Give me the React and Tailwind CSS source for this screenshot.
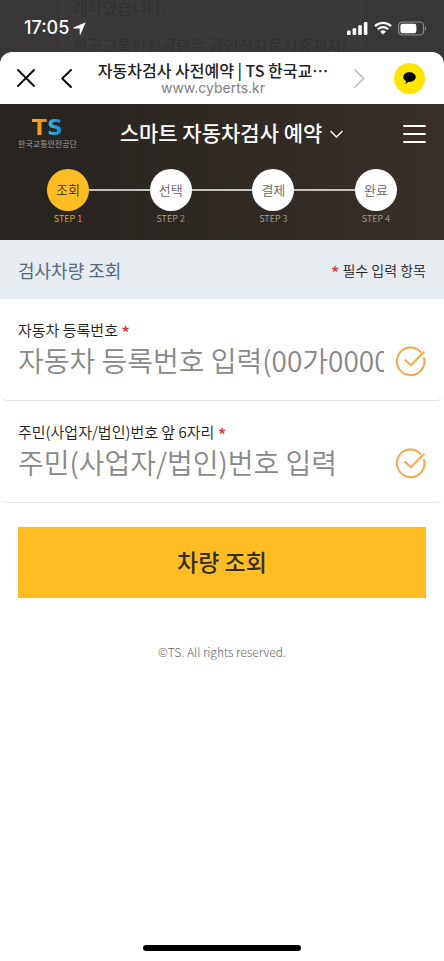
import React, { useState } from "react";

const steps = [
    { id: 1, name: "조회" },
    { id: 2, name: "선택" },
    { id: 3, name: "결제" },
    { id: 4, name: "완료" },
];

const StatusBar = () => {
    return (
        <div className="relative h-[52px] overflow-hidden bg-[#383637] text-white">
            {/* dimmed page behind the sheet */}
            <div className="absolute inset-y-0 left-[60px] right-[82px] overflow-hidden whitespace-nowrap bg-[#3a3839] pl-[13px] text-base leading-[38px] text-[#312f30]" aria-hidden="true">
                <div className="-mt-3">래하였습니다.</div>
                <div>한국교통안전공단은 공인전자문서중계자(</div>
            </div>
            <div className="relative flex items-center justify-between pl-6 pr-[17px] pt-[14px]">
                <div className="flex items-center gap-1">
                    <span className="font-['Inter'] text-[18px] font-medium leading-7">17:05</span>
                    <svg className="h-[13px] w-[13px]" viewBox="0 0 13 13" fill="currentColor">
                        <path d="M12.7.3 7.6 12.5c-.3.5-.9.4-.9-.2V6.4H.7c-.6 0-.7-.7-.1-.9z" />
                    </svg>
                </div>
                <div className="flex items-center gap-[6px]">
                    <svg className="h-[13px] w-[21px]" viewBox="0 0 21 13" fill="currentColor">
                        <rect x="0" y="8.6" width="3.6" height="4.4" rx="1" />
                        <rect x="5.6" y="6.2" width="3.6" height="6.8" rx="1" />
                        <rect x="11.2" y="3.3" width="3.6" height="9.7" rx="1" />
                        <rect x="16.8" y="0" width="3.6" height="13" rx="1" />
                    </svg>
                    <svg className="h-[14px] w-[18px]" viewBox="0 0 18 14" fill="none" stroke="currentColor" strokeWidth="2.3">
                        <path d="M1 5.1a11.4 11.4 0 0 1 16 0" />
                        <path d="M3.9 8.3a7.2 7.2 0 0 1 10.2 0" />
                        <path d="M9 13.6 6.2 10.7a4 4 0 0 1 5.6 0z" fill="currentColor" stroke="none" />
                    </svg>
                    <svg className="h-[15px] w-[29px]" viewBox="0 0 29 15" fill="none">
                        <rect x="0.6" y="1" width="25" height="13" rx="3.8" stroke="#8d8b8c" strokeWidth="1.2" />
                        <rect x="2.4" y="2.8" width="16" height="9.4" rx="2.2" fill="white" />
                        <path d="M27 5.5c1.6.6 1.6 3.4 0 4z" fill="#8d8b8c" />
                    </svg>
                </div>
            </div>
        </div>
    );
}

const BrowserBar = () => {
    return (
        <div className="bg-[#383637]">
            <div className="flex h-[52px] items-center rounded-t-xl bg-white pl-[17px] pr-[19px]">
                <button type="button" aria-label="닫기">
                    <svg className="h-[18px] w-[18px]" viewBox="0 0 18 18" fill="none" stroke="black" strokeWidth="1.8" strokeLinecap="round">
                        <path d="M1 1l16 16M17 1L1 17" />
                    </svg>
                </button>
                <button type="button" aria-label="뒤로" className="ml-[26px]">
                    <svg className="h-[19px] w-[11px]" viewBox="0 0 11 19" fill="none" stroke="black" strokeWidth="1.8" strokeLinecap="round" strokeLinejoin="round">
                        <path d="M10 1L1.2 9.5 10 18" />
                    </svg>
                </button>
                <div className="min-w-0 flex-1 text-center">
                    <div className="whitespace-nowrap text-base font-medium leading-5 text-[#222]">자동차검사 사전예약 | TS 한국교⋯</div>
                    <div className="font-['Inter'] text-sm leading-4 text-[#808080]">www.cyberts.kr</div>
                </div>
                <button type="button" aria-label="앞으로" className="mr-[29px]">
                    <svg className="h-[19px] w-[11px]" viewBox="0 0 11 19" fill="none" stroke="#b9b9b9" strokeWidth="1.6" strokeLinecap="round" strokeLinejoin="round">
                        <path d="M1 1l8.8 8.5L1 18" />
                    </svg>
                </button>
                <button type="button" aria-label="카카오톡 공유" className="flex h-[31px] w-[31px] items-center justify-center rounded-full bg-[#fde500]">
                    <svg className="h-3 w-[13px]" viewBox="0 0 13 12" fill="black">
                        <path d="M6.5.3C3 .3.3 2.4.3 5.1c0 1.8 1.1 3.2 2.8 4.1l-.6 2.2c0 .3.2.4.4.3l2.7-1.9.9.1c3.5 0 6.2-2.1 6.2-4.8S10 .3 6.5.3z" />
                    </svg>
                </button>
            </div>
        </div>
    );
}

const Header = () => {
    return (
        <header className="h-[136px] bg-linear-to-r from-[#27231f] to-[#382f28] text-white">
            <div className="flex h-[60px] items-center pl-[17px] pr-[18px]">
                <a href="#" className="flex w-[61px] flex-col items-center">
                    <span className="flex font-['DejaVu_Sans'] text-[22px] font-bold leading-5">
                        <span className="bg-linear-to-r from-[#f9b51c] to-[#ee7f1c] bg-clip-text text-transparent">T</span>
                        <span className="bg-linear-to-r from-[#35bdea] to-[#1586cf] bg-clip-text text-transparent">S</span>
                    </span>
                    <span className="whitespace-nowrap text-[8px] leading-3 text-[#a09c98]">한국교통안전공단</span>
                </a>
                <button type="button" className="flex flex-1 items-center justify-center gap-2 pb-1 pl-5">
                    <span className="whitespace-nowrap text-[21px] font-medium leading-8">스마트 자동차검사 예약</span>
                    <svg className="mt-1 h-2 w-[13px]" viewBox="0 0 13 8" fill="none" stroke="white" strokeWidth="1.4">
                        <path d="M.5 1l6 6 6-6" />
                    </svg>
                </button>
                <button type="button" aria-label="메뉴" className="ml-[38px] flex w-[23px] flex-col gap-[6px]">
                    <span className="h-[2px] w-full rounded-full bg-white"></span>
                    <span className="h-[2px] w-full rounded-full bg-white"></span>
                    <span className="h-[2px] w-full rounded-full bg-white"></span>
                </button>
            </div>
            <ol className="flex items-start px-[47px] pt-[5px]">
                {steps.map((step, i) => (
                    <li key={step.id} className={i === 0 ? "flex" : "flex flex-1"}>
                        {i > 0 && <span className="mt-5 h-[2px] flex-1 bg-[#c4c1be]"></span>}
                        <div className="flex w-[42px] flex-col items-center">
                            <span className={`flex h-[42px] w-[42px] items-center justify-center rounded-full text-[13px] font-[350] leading-5 ${i === 0 ? "bg-[#ffbd23] text-[#3c3019]" : "bg-white text-[#666]"}`}>{step.name}</span>
                            <span className={`whitespace-nowrap text-[9px] font-[350] leading-4 ${i === 0 ? "text-[#e0a824]" : "text-[#a5a19d]"}`}>STEP {step.id}</span>
                        </div>
                    </li>
                ))}
            </ol>
        </header>
    );
}

const Required = () => {
    return <span className="align-sub text-[18px] font-medium leading-none text-[#e0393e]">*</span>;
}

const CheckIcon = () => {
    return (
        <svg className="h-[31px] w-[31px] shrink-0" viewBox="0 0 31 31" fill="none" stroke="#faa54a" strokeWidth="2">
            <path d="M26.2 6.4A13.8 13.8 0 1 0 28.9 11.4" />
            <path d="M9.7 13.4l6.2 5.8L29.4 5.6" />
        </svg>
    );
}

const Field = ({ id, label, placeholder, value, onChange }) => {
    return (
        <div className="flex h-[102px] items-end gap-[11px] rounded-b-lg border-b border-[#e4e6e8] bg-white px-[18px] pb-5">
            <div className="min-w-0 flex-1">
                <label htmlFor={id} className="block h-5 text-[15px] font-[350] leading-5 text-[#222]">
                    {label} <Required />
                </label>
                <input id={id} name={id} type="text" className="block h-10 w-full text-[28px] font-[350] text-[#333] outline-none placeholder:text-[#888]" placeholder={placeholder} value={value} onChange={onChange} />
            </div>
            <div className="pb-[3px]">
                <CheckIcon />
            </div>
        </div>
    );
}

const App = () => {
    const [inputs, setInputs] = useState({
        carNumber: "",
        idNumber: "",
    })
    const handleChange = (event) => {
        setInputs({...inputs,[event.target.name]:event.target.value})
    }
    const handleSubmit = (event) => {
        event.preventDefault();
    }
    return (
        <div className="flex min-h-screen flex-col bg-white font-['Noto_Sans_CJK_KR',sans-serif]">
            <StatusBar />
            <BrowserBar />
            <Header />
            <main>
                <div className="flex h-[59px] items-center justify-between bg-[#e7ecf1] px-[18px]">
                    <h2 className="text-[18px] leading-6 text-[#566b7b]">검사차량 조회</h2>
                    <p className="h-5 text-sm font-[350] leading-5 text-[#222]"><Required /> 필수 입력 항목</p>
                </div>
                <form onSubmit={handleSubmit}>
                    <Field id="carNumber" label="자동차 등록번호" placeholder="자동차 등록번호 입력(00가0000)" value={inputs.carNumber} onChange={handleChange} />
                    <Field id="idNumber" label="주민(사업자/법인)번호 앞 6자리" placeholder="주민(사업자/법인)번호 입력" value={inputs.idNumber} onChange={handleChange} />
                    <div className="px-[18px] pt-6">
                        <button type="submit" className="h-[71px] w-full bg-[#ffbd23] pb-[2px] text-[23px] font-medium text-[#332e22]">차량 조회</button>
                    </div>
                </form>
            </main>
            <footer className="pt-11 text-center text-xs font-light leading-5 text-[#666]">©TS. All rights reserved.</footer>
            <div className="mt-auto flex justify-center pb-[10px]">
                <div className="h-[6px] w-[158px] rounded-full bg-black"></div>
            </div>
        </div>
    );
}

export default App;
